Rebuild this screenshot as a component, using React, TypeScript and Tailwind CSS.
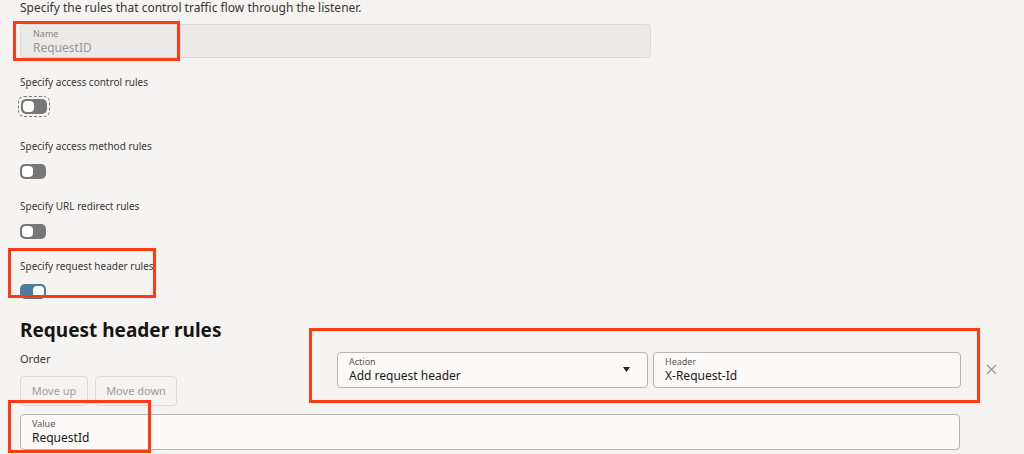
export default function App() {
  const Toggle = ({ on, focus }: { on?: boolean; focus?: boolean }) => (
    <div className={focus ? "inline-flex p-[2px] rounded-[6px] border border-dashed border-[#777]" : "inline-flex"}>
      <div className={(on ? "bg-[#4a7d9e] justify-end" : "bg-[#777] justify-start") + " w-[26px] h-[15px] rounded-[5px] flex items-center px-[2px]"}>
        <div className="w-[11px] h-[11px] rounded-[4px] bg-white" />
      </div>
    </div>
  );
  const Box = ({ l, t, w, h }: { l: number; t: number; w: number; h: number }) => (
    <div className="absolute border-[3px] border-[#ff3b14]" style={{ left: l, top: t, width: w, height: h }} />
  );
  return (
    <div className="relative w-[1024px] h-[454px] overflow-hidden bg-[#f5f4f2] text-[#1a1816]" style={{ fontFamily: '"Noto Sans", sans-serif' }}>
      <div className="pl-[20px] pt-[0px]">
        <div className="text-[12px] leading-[16px] text-[#3a3632]">Specify the rules that control traffic flow through the listener.</div>
        <div className="mt-[8px] w-[631px] h-[34px] bg-[#ebeae8] border border-[#dcdad6] rounded-[4px] px-[12px] pt-[3px]">
          <div className="text-[9px] leading-[12px] text-[#8b8680]">Name</div>
          <div className="text-[12px] leading-[15px] text-[#9b9690]">RequestID</div>
        </div>
        {[
          ["Specify access control rules", false, true],
          ["Specify access method rules", false, false],
          ["Specify URL redirect rules", false, false],
          ["Specify request header rules", true, false],
        ].map(([t, on, f], i) => (
          <div key={i} className={i === 0 ? "mt-[17px]" : "mt-[21px]"}>
            <div className="text-[10px] leading-[14px] text-[#3a3632]">{t as string}</div>
            <div className={f ? "mt-[5px] -ml-[2px] h-[24px]" : "mt-[6px] h-[19px]"}>
              <Toggle on={on as boolean} focus={f as boolean} />
            </div>
          </div>
        ))}
        <div className="mt-[20px] text-[19px] leading-[24px] font-bold text-[#161513]">Request header rules</div>
        <div className="flex">
          <div className="w-[317px]">
            <div className="mt-[10px] text-[11px] leading-[14px] text-[#3a3632]">Order</div>
            <div className="mt-[10px] flex gap-[7px]">
              <div className="w-[68px] h-[30px] rounded-[4px] border border-[#dcdad6] flex items-center justify-center text-[11px] text-[#a09b95]">Move up</div>
              <div className="w-[82px] h-[30px] rounded-[4px] border border-[#dcdad6] flex items-center justify-center text-[11px] text-[#a09b95]">Move down</div>
            </div>
          </div>
          <div className="flex items-start gap-[5px] mt-[10px]">
            <div className="relative w-[311px] h-[36px] bg-[#fbfaf9] border border-[#b8b5b0] rounded-[4px] px-[11px] pt-[3px]">
              <div className="text-[9px] leading-[12px] text-[#5a5650]">Action</div>
              <div className="text-[12px] leading-[16px]">Add request header</div>
              <svg className="absolute right-[17px] top-[14px]" width="7" height="5" viewBox="0 0 7 5"><path d="M0 0h7L3.5 5z" fill="#222" /></svg>
            </div>
            <div className="w-[308px] h-[36px] bg-[#fbfaf9] border border-[#b8b5b0] rounded-[4px] px-[11px] pt-[3px]">
              <div className="text-[9px] leading-[12px] text-[#5a5650]">Header</div>
              <div className="text-[12px] leading-[16px]">X-Request-Id</div>
            </div>
            <svg className="ml-[20px] mt-[12px]" width="11" height="11" viewBox="0 0 11 11"><path d="M1 1l9 9M10 1l-9 9" stroke="#9a958f" strokeWidth="1.2" /></svg>
          </div>
        </div>
        <div className="mt-[8px] w-[940px] h-[36px] bg-[#fbfaf9] border border-[#b8b5b0] rounded-[4px] px-[11px] pt-[3px]">
          <div className="text-[9px] leading-[12px] text-[#5a5650]">Value</div>
          <div className="text-[12px] leading-[16px]">RequestId</div>
        </div>
      </div>
      <Box l={13} t={21} w={167} h={40} />
      <Box l={8} t={248} w={148} h={50} />
      <Box l={309} t={328} w={671} h={75} />
      <Box l={8} t={400} w={143} h={53} />
    </div>
  );
}
